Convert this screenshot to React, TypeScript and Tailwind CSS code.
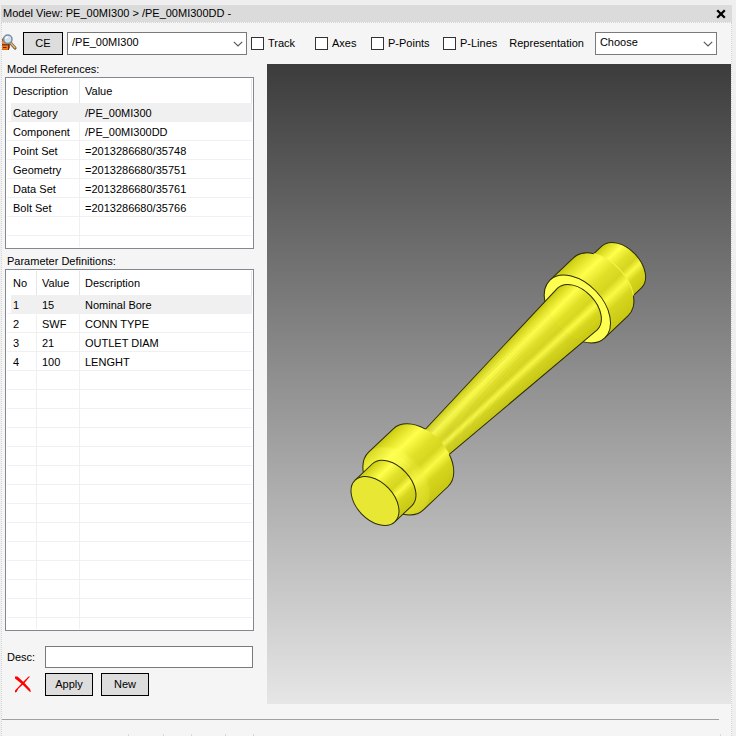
// ============================================================================
// MODEL VIEW PANEL
// Catalogue component properties with a shaded 3D preview
// ============================================================================

import { memo, useState } from "react";
import type { ReactNode } from "react";

// -----------------------------------------------------------------------------
// Data
// -----------------------------------------------------------------------------

interface Column {
  label: string;
  width: string;
}

const REFERENCE_COLUMNS: Column[] = [
  { label: "Description", width: "w-[73px]" },
  { label: "Value", width: "" },
];

const REFERENCE_ROWS = [
  ["Category", "/PE_00MI300"],
  ["Component", "/PE_00MI300DD"],
  ["Point Set", "=2013286680/35748"],
  ["Geometry", "=2013286680/35751"],
  ["Data Set", "=2013286680/35761"],
  ["Bolt Set", "=2013286680/35766"],
];

const PARAMETER_COLUMNS: Column[] = [
  { label: "No", width: "w-[30px]" },
  { label: "Value", width: "w-[43px]" },
  { label: "Description", width: "" },
];

const PARAMETER_ROWS = [
  ["1", "15", "Nominal Bore"],
  ["2", "SWF", "CONN TYPE"],
  ["3", "21", "OUTLET DIAM"],
  ["4", "100", "LENGHT"],
];

// -----------------------------------------------------------------------------
// Icons
// -----------------------------------------------------------------------------

const FindIcon = () => (
  <svg width="16" height="18" viewBox="0 0 16 18" className="mb-0.5" aria-hidden="true">
    <path d="M0 5 L2 3 H8 V14 L6 16 H0 Z" fill="#b8561a" />
    <path d="M0 7 H6 V10 H0 Z" fill="#e8883c" />
    <path d="M0 11.5 H6 V15.5 H0 Z" fill="#f07c22" />
    <path d="M0 10.8 H6.5 M6.5 7 V16" stroke="#6e3210" />
    <path d="M1 13.5 H4.5" stroke="#5c2606" />
    <path d="M8.5 9 L13 14" stroke="#7c6448" strokeWidth="3.2" strokeLinecap="round" />
    <path d="M9 9.4 L12.8 13.6" stroke="#f0c080" strokeWidth="1.4" strokeLinecap="round" />
    <circle cx="5.8" cy="5.2" r="4.2" fill="#cfe2f2" stroke="#7c8c9c" strokeWidth="1.5" />
    <path d="M3.4 5.2 Q3.8 3 6.2 2.8" fill="none" stroke="#fff" strokeWidth="1.3" />
  </svg>
);

const CloseIcon = () => (
  <svg width="10" height="10" viewBox="0 0 10 10" aria-hidden="true">
    <path d="M1.2 1.2 L8.8 8.8 M8.8 1.2 L1.2 8.8" stroke="#000" strokeWidth="2.3" />
  </svg>
);

const DeleteIcon = () => (
  <svg width="19" height="17" viewBox="0 0 19 17" aria-hidden="true">
    <path d="M2 0.5 H4.5 L11 6.5 L17 13 L18 16 L16.5 15.5 L9.5 8.5 L2 2.5 Z" fill="#f00" />
    <path d="M17 0.5 L11 7.5 L5.5 12.5 L3.5 16 L2 16.5 V14.5 L9 7 L15.5 0.5 Z" fill="#f00" />
  </svg>
);

const Chevron = () => (
  <svg
    width="10"
    height="6"
    viewBox="0 0 10 6"
    className="pointer-events-none absolute right-1 top-[9px]"
    aria-hidden="true"
  >
    <path d="M0.8 0.8 L5 5 L9.2 0.8" fill="none" stroke="#5a5a5a" strokeWidth="1.2" />
  </svg>
);

// -----------------------------------------------------------------------------
// Controls
// -----------------------------------------------------------------------------

interface SelectProps {
  label: string;
  options: string[];
  className: string;
}

const Select = ({ label, options, className }: SelectProps) => (
  <div className={`relative h-[23px] ${className}`}>
    <select
      aria-label={label}
      className="block h-full w-full appearance-none border border-[#7a7a7a] bg-white pb-1 pl-1 pr-5 leading-4"
    >
      {options.map((option) => (
        <option key={option}>{option}</option>
      ))}
    </select>
    <Chevron />
  </div>
);

const Check = ({ label }: { label: string }) => (
  <label className="flex items-center gap-1">
    <input type="checkbox" className="size-[13px] appearance-none border border-[#333] bg-white checked:bg-[#333]" />
    <span className="pb-0.5">{label}</span>
  </label>
);

const Button = ({ children, className }: { children: ReactNode; className: string }) => (
  <button type="button" className={`h-[23px] border border-black bg-[#dddddd] pb-px ${className}`}>
    {children}
  </button>
);

// -----------------------------------------------------------------------------
// Grid
// -----------------------------------------------------------------------------

interface GridProps {
  label: string;
  columns: Column[];
  rows: string[][];
  blankRows: number;
}

const Grid = memo(({ label, columns, rows, blankRows }: GridProps) => (
  <div className="border border-[#828790] bg-white p-px">
    <table aria-label={label} className="w-full table-fixed border-separate border-spacing-0 text-left">
      <thead>
        <tr>
          {columns.map((column) => (
            <th
              key={column.label}
              className={`h-6 border-r border-[#e5e5e5] p-0 pl-[5px] font-normal first:pl-1.5 ${column.width}`}
            >
              {column.label}
            </th>
          ))}
        </tr>
      </thead>
      <tbody>
        {rows.map((row, index) => (
          <tr key={row[0]}>
            {row.map((cell) => (
              <td
                key={cell}
                className={`h-[19px] border-b border-r border-[#f0f0f0] p-0 pl-[5px] pt-0.5 leading-4 first:pl-1.5 last:border-r-0 ${
                  index === 0 ? "bg-[#f0f0f0] first:bg-[linear-gradient(to_right,#fff_4px,#f0f0f0_4px)]" : ""
                }`}
              >
                {cell}
              </td>
            ))}
          </tr>
        ))}
        {Array.from({ length: blankRows }, (_, index) => (
          <tr key={index} className="group">
            {columns.map((column) => (
              <td
                key={column.label}
                className="h-[19px] border-b border-r border-[#f0f0f0] p-0 last:border-r-0 group-last:h-[11px] group-last:border-b-0"
              />
            ))}
          </tr>
        ))}
      </tbody>
    </table>
  </div>
));

Grid.displayName = "Grid";

// -----------------------------------------------------------------------------
// 3D preview
// Drawn along the x axis of the pipe, then rotated as one group
// -----------------------------------------------------------------------------

const SHADES: [number, number[]][] = [
  [0, [200, 200, 20]],
  [0.06, [216, 216, 30]],
  [0.24, [255, 255, 76]],
  [0.42, [224, 224, 40]],
  [0.56, [214, 214, 32]],
  [0.67, [250, 250, 68]],
  [0.79, [214, 214, 30]],
  [1, [200, 200, 20]],
];

const WEDGES = 48;

function shadeAt(t: number): string {
  const next = Math.max(1, SHADES.findIndex(([stop]) => stop >= t));
  const [fromStop, from] = SHADES[next - 1];
  const [toStop, to] = SHADES[next];
  const k = (t - fromStop) / (toStop - fromStop);
  return `rgb(${from.map((c, i) => Math.round(c + (to[i] - c) * k)).join(",")})`;
}

// One lengthwise strip of the tapered pipe
function wedgePath(index: number): string {
  const a = (index / WEDGES) * 2 - 1;
  const b = Math.min(1, ((index + 1.4) / WEDGES) * 2 - 1);
  const endX = (v: number) => 279 + 18.6 * Math.sqrt(1 - v * v);
  return `M63 ${a * 16} L${endX(a)} ${a * 28.8} L${endX(b)} ${b * 28.8} L63 ${b * 16} Z`;
}

const ModelPreview = () => (
  <svg viewBox="267 64 464 640" className="block w-full" role="img" aria-label="Model preview">
    <defs>
      <linearGradient id="backdrop" x1="0" y1="0" x2="0" y2="1">
        <stop offset="0" stopColor="#3c3c3c" />
        <stop offset="1" stopColor="#e6e6e6" />
      </linearGradient>
      <linearGradient id="shade" x1="0" y1="0" x2="0" y2="1">
        {SHADES.map(([stop]) => (
          <stop key={stop} offset={stop} stopColor={shadeAt(stop)} />
        ))}
      </linearGradient>
      <linearGradient id="rim" x1="0" y1="0" x2="0" y2="1">
        <stop offset="0" stopColor="#dcdc28" />
        <stop offset="0.2" stopColor="#ffff54" />
        <stop offset="0.36" stopColor="#f8f848" />
        <stop offset="0.52" stopColor="#e0e02c" />
        <stop offset="0.68" stopColor="#f6f644" />
        <stop offset="0.8" stopColor="#e2e22e" />
        <stop offset="1" stopColor="#d6d622" />
      </linearGradient>
    </defs>
    <rect x="267" y="64" width="464" height="640" fill="url(#backdrop)" />
    <g transform="translate(375 501) rotate(-43.5)" fill="none" stroke="#2c2c08" strokeWidth="1">
      {/* Far stub */}
      <path d="M300 -28.8 H340 A18.6 28.8 0 0 1 340 28.8 H300 Z" fill="url(#shade)" stroke="none" />
      <path d="M329 -28.8 H340 A18.6 28.8 0 0 1 340 28.8 H329" />

      {/* Far collar */}
      <path d="M279 -39.8 H311 A25.7 39.8 0 0 1 311 39.8 H279 Z" fill="url(#shade)" stroke="none" />
      <path d="M279 -39.8 H311 A25.7 39.8 0 0 1 329 -28.8" />
      <path d="M329 28.8 A25.7 39.8 0 0 1 311 39.8 H279" />
      <path d="M329 -28.8 A25.7 39.8 0 0 1 329 28.8" stroke="#f4f448" />
      <ellipse cx="279" cy="0" rx="25.7" ry="39.8" fill="#ffff52" />

      {/* Tapered body */}
      <g stroke="none">
        {Array.from({ length: WEDGES }, (_, index) => (
          <path key={index} d={wedgePath(index)} fill={shadeAt((index + 0.5) / WEDGES)} />
        ))}
      </g>
      <path d="M63 -16 L279 -28.8 A18.6 28.8 0 0 1 279 28.8 L63 16" />

      {/* Near collar, with its rounded front edge */}
      <path d="M29 -39.8 H63 A25.7 39.8 0 0 1 63 39.8 H29 A25.7 39.8 0 0 1 29 -39.8 Z" fill="url(#shade)" stroke="none" />
      <g fill="url(#rim)" stroke="none">
        <ellipse cx="31" cy="0" rx="25.7" ry="39" opacity="0.4" />
        <ellipse cx="29" cy="0" rx="25.2" ry="39.4" opacity="0.6" />
        <ellipse cx="27" cy="0" rx="23.6" ry="37" />
      </g>
      <path d="M86 -17.4 A25.7 39.8 0 0 0 63 -39.8 H29 A25.7 39.8 0 0 0 29 39.8 H63 A25.7 39.8 0 0 0 86 17.4" />

      {/* Near stub */}
      <path d="M0 -28.8 H23.4 A18.6 28.8 0 0 1 23.4 28.8 H0 Z" fill="url(#shade)" />
      <ellipse cx="0" cy="0" rx="18.6" ry="28.8" fill="#e8e834" />
    </g>
  </svg>
);

// -----------------------------------------------------------------------------
// App
// -----------------------------------------------------------------------------

export default function App() {
  const [description, setDescription] = useState("");

  return (
    <div className="flex min-h-screen flex-col bg-[#efefef] pl-px pr-1 pt-[5px] font-['Liberation_Sans',Arial,sans-serif] text-[11px] leading-[14px] text-black">
      <header className="flex h-[17px] items-center justify-between bg-[#dbdbdb] pl-0.5 pr-1.5">
        <h1 className="pb-px">Model View: PE_00MI300 &gt; /PE_00MI300DD -</h1>
        <button type="button" aria-label="Close">
          <CloseIcon />
        </button>
      </header>

      <main className="flex flex-1 flex-col border-x border-t border-dotted border-[#d4d4d4] bg-[#f5f5f5]">
        {/* Toolbar */}
        <div className="flex h-[41px] items-center">
          <FindIcon />
          <Button className="ml-[5px] w-10">CE</Button>
          <Select label="Element" options={["/PE_00MI300"]} className="ml-1 w-[180px]" />
          <div className="ml-1 grid grid-cols-[64px_56px_72px_auto]">
            <Check label="Track" />
            <Check label="Axes" />
            <Check label="P-Points" />
            <Check label="P-Lines" />
          </div>
          <span className="ml-3 pb-px">Representation</span>
          <Select label="Representation" options={["Choose"]} className="ml-[11px] w-[122px]" />
        </div>

        <div className="flex items-start">
          {/* Properties */}
          <section className="w-[265px] shrink-0 pl-[3px] pr-[13px]">
            <h2 className="h-[13px] pl-0.5 leading-[10px]">Model References:</h2>
            <Grid label="Model References" columns={REFERENCE_COLUMNS} rows={REFERENCE_ROWS} blankRows={2} />

            <h2 className="mt-[7px] h-[13px] pl-0.5 leading-[10px]">Parameter Definitions:</h2>
            <Grid label="Parameter Definitions" columns={PARAMETER_COLUMNS} rows={PARAMETER_ROWS} blankRows={14} />

            <div className="mt-[15px] flex items-center pr-px">
              <label htmlFor="desc" className="w-10 pl-0.5">
                Desc:
              </label>
              <input
                id="desc"
                value={description}
                onChange={(e) => setDescription(e.target.value)}
                className="h-[22px] min-w-0 flex-1 border border-[#7a7a7a] bg-white px-1"
              />
            </div>

            <div className="mt-[5px] flex items-center">
              <button type="button" aria-label="Delete" className="w-10 pl-2">
                <DeleteIcon />
              </button>
              <Button className="w-12">Apply</Button>
              <Button className="ml-2 w-12">New</Button>
            </div>
          </section>

          <section className="min-w-0 flex-1">
            <ModelPreview />
          </section>
        </div>

        <hr className="mr-3 mt-[15px] border-t border-[#a0a0a0]" />

        {/* Status bar */}
        <footer className="mt-auto flex h-0.5">
          <div className="w-[127px] border-r border-[#d7d7d7]" />
          <div className="w-[35px] border-r border-[#d7d7d7]" />
          <div className="w-7 border-r border-[#d7d7d7]" />
          <div className="w-[34px] border-r border-[#d7d7d7]" />
          <div className="w-7 border-r border-[#d7d7d7]" />
          <div className="mr-2.5 flex-1 border-r border-[#d7d7d7]" />
        </footer>
      </main>
    </div>
  );
}
